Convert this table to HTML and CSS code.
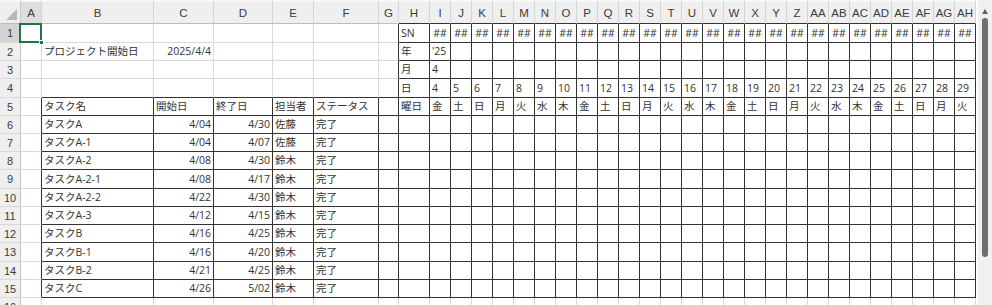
FILE: index.html
```html
<!DOCTYPE html>
<html lang="ja">
<head>
<meta charset="utf-8">
<title>ガントチャート</title>
<link rel="stylesheet" href="styles.css">
</head>
<body>
<div class="app">
<div class="sheet">
<!-- header row -->
<div class="corner"><span class="tri"></span></div>
<div class="ch sel">A</div><div class="ch">B</div><div class="ch">C</div><div class="ch">D</div><div class="ch">E</div><div class="ch">F</div><div class="ch">G</div>
<div class="ch bb">H</div><div class="ch bb">I</div><div class="ch bb">J</div><div class="ch bb">K</div><div class="ch bb">L</div><div class="ch bb">M</div><div class="ch bb">N</div><div class="ch bb">O</div><div class="ch bb">P</div><div class="ch bb">Q</div><div class="ch bb">R</div><div class="ch bb">S</div><div class="ch bb">T</div><div class="ch bb">U</div><div class="ch bb">V</div><div class="ch bb">W</div><div class="ch bb">X</div><div class="ch bb">Y</div><div class="ch bb">Z</div><div class="ch bb">AA</div><div class="ch bb">AB</div><div class="ch bb">AC</div><div class="ch bb">AD</div><div class="ch bb">AE</div><div class="ch bb">AF</div><div class="ch bb">AG</div><div class="ch bb">AH</div>

<!-- row 1 -->
<div class="rh sel">1</div>
<div class="c a1"><span class="selbox"><span class="handle"></span></span></div><div class="c"></div><div class="c"></div><div class="c"></div><div class="c"></div><div class="c"></div><div class="c br"></div>
<div class="c b">SN</div>
<div class="c b m">##</div><div class="c b m">##</div><div class="c b m">##</div><div class="c b m">##</div><div class="c b m">##</div><div class="c b m">##</div><div class="c b m">##</div><div class="c b m">##</div><div class="c b m">##</div><div class="c b m">##</div><div class="c b m">##</div><div class="c b m">##</div><div class="c b m">##</div><div class="c b m">##</div><div class="c b m">##</div><div class="c b m">##</div><div class="c b m">##</div><div class="c b m">##</div><div class="c b m">##</div><div class="c b m">##</div><div class="c b m">##</div><div class="c b m">##</div><div class="c b m">##</div><div class="c b m">##</div><div class="c b m">##</div><div class="c b m">##</div>

<!-- row 2 -->
<div class="rh">2</div>
<div class="c"></div><div class="c">プロジェクト開始日</div><div class="c r">2025/4/4</div><div class="c"></div><div class="c"></div><div class="c"></div><div class="c br"></div>
<div class="c b">年</div><div class="c b">'25</div>
<div class="c b"></div><div class="c b"></div><div class="c b"></div><div class="c b"></div><div class="c b"></div><div class="c b"></div><div class="c b"></div><div class="c b"></div><div class="c b"></div><div class="c b"></div><div class="c b"></div><div class="c b"></div><div class="c b"></div><div class="c b"></div><div class="c b"></div><div class="c b"></div><div class="c b"></div><div class="c b"></div><div class="c b"></div><div class="c b"></div><div class="c b"></div><div class="c b"></div><div class="c b"></div><div class="c b"></div><div class="c b"></div>

<!-- row 3 -->
<div class="rh">3</div>
<div class="c"></div><div class="c"></div><div class="c"></div><div class="c"></div><div class="c"></div><div class="c"></div><div class="c br"></div>
<div class="c b">月</div><div class="c b">4</div>
<div class="c b"></div><div class="c b"></div><div class="c b"></div><div class="c b"></div><div class="c b"></div><div class="c b"></div><div class="c b"></div><div class="c b"></div><div class="c b"></div><div class="c b"></div><div class="c b"></div><div class="c b"></div><div class="c b"></div><div class="c b"></div><div class="c b"></div><div class="c b"></div><div class="c b"></div><div class="c b"></div><div class="c b"></div><div class="c b"></div><div class="c b"></div><div class="c b"></div><div class="c b"></div><div class="c b"></div><div class="c b"></div>

<!-- row 4 -->
<div class="rh">4</div>
<div class="c"></div><div class="c bb"></div><div class="c bb"></div><div class="c bb"></div><div class="c bb"></div><div class="c bb"></div><div class="c b"></div>
<div class="c b">日</div>
<div class="c b">4</div><div class="c b">5</div><div class="c b">6</div><div class="c b">7</div><div class="c b">8</div><div class="c b">9</div><div class="c b">10</div><div class="c b">11</div><div class="c b">12</div><div class="c b">13</div><div class="c b">14</div><div class="c b">15</div><div class="c b">16</div><div class="c b">17</div><div class="c b">18</div><div class="c b">19</div><div class="c b">20</div><div class="c b">21</div><div class="c b">22</div><div class="c b">23</div><div class="c b">24</div><div class="c b">25</div><div class="c b">26</div><div class="c b">27</div><div class="c b">28</div><div class="c b">29</div>

<!-- row 5 -->
<div class="rh">5</div>
<div class="c br"></div><div class="c b">タスク名</div><div class="c b">開始日</div><div class="c b">終了日</div><div class="c b">担当者</div><div class="c b">ステータス</div><div class="c b"></div>
<div class="c b">曜日</div>
<div class="c b">金</div><div class="c b">土</div><div class="c b">日</div><div class="c b">月</div><div class="c b">火</div><div class="c b">水</div><div class="c b">木</div><div class="c b">金</div><div class="c b">土</div><div class="c b">日</div><div class="c b">月</div><div class="c b">火</div><div class="c b">水</div><div class="c b">木</div><div class="c b">金</div><div class="c b">土</div><div class="c b">日</div><div class="c b">月</div><div class="c b">火</div><div class="c b">水</div><div class="c b">木</div><div class="c b">金</div><div class="c b">土</div><div class="c b">日</div><div class="c b">月</div><div class="c b">火</div>

<!-- row 6 -->
<div class="rh">6</div>
<div class="c br"></div><div class="c b">タスクA</div><div class="c b r">4/04</div><div class="c b r">4/30</div><div class="c b">佐藤</div><div class="c b">完了</div><div class="c b"></div><div class="c b"></div>
<div class="c b"></div><div class="c b"></div><div class="c b"></div><div class="c b"></div><div class="c b"></div><div class="c b"></div><div class="c b"></div><div class="c b"></div><div class="c b"></div><div class="c b"></div><div class="c b"></div><div class="c b"></div><div class="c b"></div><div class="c b"></div><div class="c b"></div><div class="c b"></div><div class="c b"></div><div class="c b"></div><div class="c b"></div><div class="c b"></div><div class="c b"></div><div class="c b"></div><div class="c b"></div><div class="c b"></div><div class="c b"></div><div class="c b"></div>

<!-- row 7 -->
<div class="rh">7</div>
<div class="c br"></div><div class="c b">タスクA-1</div><div class="c b r">4/04</div><div class="c b r">4/07</div><div class="c b">佐藤</div><div class="c b">完了</div><div class="c b"></div><div class="c b"></div>
<div class="c b"></div><div class="c b"></div><div class="c b"></div><div class="c b"></div><div class="c b"></div><div class="c b"></div><div class="c b"></div><div class="c b"></div><div class="c b"></div><div class="c b"></div><div class="c b"></div><div class="c b"></div><div class="c b"></div><div class="c b"></div><div class="c b"></div><div class="c b"></div><div class="c b"></div><div class="c b"></div><div class="c b"></div><div class="c b"></div><div class="c b"></div><div class="c b"></div><div class="c b"></div><div class="c b"></div><div class="c b"></div><div class="c b"></div>

<!-- row 8 -->
<div class="rh">8</div>
<div class="c br"></div><div class="c b">タスクA-2</div><div class="c b r">4/08</div><div class="c b r">4/30</div><div class="c b">鈴木</div><div class="c b">完了</div><div class="c b"></div><div class="c b"></div>
<div class="c b"></div><div class="c b"></div><div class="c b"></div><div class="c b"></div><div class="c b"></div><div class="c b"></div><div class="c b"></div><div class="c b"></div><div class="c b"></div><div class="c b"></div><div class="c b"></div><div class="c b"></div><div class="c b"></div><div class="c b"></div><div class="c b"></div><div class="c b"></div><div class="c b"></div><div class="c b"></div><div class="c b"></div><div class="c b"></div><div class="c b"></div><div class="c b"></div><div class="c b"></div><div class="c b"></div><div class="c b"></div><div class="c b"></div>

<!-- row 9 -->
<div class="rh">9</div>
<div class="c br"></div><div class="c b">タスクA-2-1</div><div class="c b r">4/08</div><div class="c b r">4/17</div><div class="c b">鈴木</div><div class="c b">完了</div><div class="c b"></div><div class="c b"></div>
<div class="c b"></div><div class="c b"></div><div class="c b"></div><div class="c b"></div><div class="c b"></div><div class="c b"></div><div class="c b"></div><div class="c b"></div><div class="c b"></div><div class="c b"></div><div class="c b"></div><div class="c b"></div><div class="c b"></div><div class="c b"></div><div class="c b"></div><div class="c b"></div><div class="c b"></div><div class="c b"></div><div class="c b"></div><div class="c b"></div><div class="c b"></div><div class="c b"></div><div class="c b"></div><div class="c b"></div><div class="c b"></div><div class="c b"></div>

<!-- row 10 -->
<div class="rh">10</div>
<div class="c br"></div><div class="c b">タスクA-2-2</div><div class="c b r">4/22</div><div class="c b r">4/30</div><div class="c b">鈴木</div><div class="c b">完了</div><div class="c b"></div><div class="c b"></div>
<div class="c b"></div><div class="c b"></div><div class="c b"></div><div class="c b"></div><div class="c b"></div><div class="c b"></div><div class="c b"></div><div class="c b"></div><div class="c b"></div><div class="c b"></div><div class="c b"></div><div class="c b"></div><div class="c b"></div><div class="c b"></div><div class="c b"></div><div class="c b"></div><div class="c b"></div><div class="c b"></div><div class="c b"></div><div class="c b"></div><div class="c b"></div><div class="c b"></div><div class="c b"></div><div class="c b"></div><div class="c b"></div><div class="c b"></div>

<!-- row 11 -->
<div class="rh">11</div>
<div class="c br"></div><div class="c b">タスクA-3</div><div class="c b r">4/12</div><div class="c b r">4/15</div><div class="c b">鈴木</div><div class="c b">完了</div><div class="c b"></div><div class="c b"></div>
<div class="c b"></div><div class="c b"></div><div class="c b"></div><div class="c b"></div><div class="c b"></div><div class="c b"></div><div class="c b"></div><div class="c b"></div><div class="c b"></div><div class="c b"></div><div class="c b"></div><div class="c b"></div><div class="c b"></div><div class="c b"></div><div class="c b"></div><div class="c b"></div><div class="c b"></div><div class="c b"></div><div class="c b"></div><div class="c b"></div><div class="c b"></div><div class="c b"></div><div class="c b"></div><div class="c b"></div><div class="c b"></div><div class="c b"></div>

<!-- row 12 -->
<div class="rh">12</div>
<div class="c br"></div><div class="c b">タスクB</div><div class="c b r">4/16</div><div class="c b r">4/25</div><div class="c b">鈴木</div><div class="c b">完了</div><div class="c b"></div><div class="c b"></div>
<div class="c b"></div><div class="c b"></div><div class="c b"></div><div class="c b"></div><div class="c b"></div><div class="c b"></div><div class="c b"></div><div class="c b"></div><div class="c b"></div><div class="c b"></div><div class="c b"></div><div class="c b"></div><div class="c b"></div><div class="c b"></div><div class="c b"></div><div class="c b"></div><div class="c b"></div><div class="c b"></div><div class="c b"></div><div class="c b"></div><div class="c b"></div><div class="c b"></div><div class="c b"></div><div class="c b"></div><div class="c b"></div><div class="c b"></div>

<!-- row 13 -->
<div class="rh">13</div>
<div class="c br"></div><div class="c b">タスクB-1</div><div class="c b r">4/16</div><div class="c b r">4/20</div><div class="c b">鈴木</div><div class="c b">完了</div><div class="c b"></div><div class="c b"></div>
<div class="c b"></div><div class="c b"></div><div class="c b"></div><div class="c b"></div><div class="c b"></div><div class="c b"></div><div class="c b"></div><div class="c b"></div><div class="c b"></div><div class="c b"></div><div class="c b"></div><div class="c b"></div><div class="c b"></div><div class="c b"></div><div class="c b"></div><div class="c b"></div><div class="c b"></div><div class="c b"></div><div class="c b"></div><div class="c b"></div><div class="c b"></div><div class="c b"></div><div class="c b"></div><div class="c b"></div><div class="c b"></div><div class="c b"></div>

<!-- row 14 -->
<div class="rh">14</div>
<div class="c br"></div><div class="c b">タスクB-2</div><div class="c b r">4/21</div><div class="c b r">4/25</div><div class="c b">鈴木</div><div class="c b">完了</div><div class="c b"></div><div class="c b"></div>
<div class="c b"></div><div class="c b"></div><div class="c b"></div><div class="c b"></div><div class="c b"></div><div class="c b"></div><div class="c b"></div><div class="c b"></div><div class="c b"></div><div class="c b"></div><div class="c b"></div><div class="c b"></div><div class="c b"></div><div class="c b"></div><div class="c b"></div><div class="c b"></div><div class="c b"></div><div class="c b"></div><div class="c b"></div><div class="c b"></div><div class="c b"></div><div class="c b"></div><div class="c b"></div><div class="c b"></div><div class="c b"></div><div class="c b"></div>

<!-- row 15 -->
<div class="rh">15</div>
<div class="c br"></div><div class="c b">タスクC</div><div class="c b r">4/26</div><div class="c b r">5/02</div><div class="c b">鈴木</div><div class="c b">完了</div><div class="c b"></div><div class="c b"></div>
<div class="c b"></div><div class="c b"></div><div class="c b"></div><div class="c b"></div><div class="c b"></div><div class="c b"></div><div class="c b"></div><div class="c b"></div><div class="c b"></div><div class="c b"></div><div class="c b"></div><div class="c b"></div><div class="c b"></div><div class="c b"></div><div class="c b"></div><div class="c b"></div><div class="c b"></div><div class="c b"></div><div class="c b"></div><div class="c b"></div><div class="c b"></div><div class="c b"></div><div class="c b"></div><div class="c b"></div><div class="c b"></div><div class="c b"></div>

<!-- row 16 -->
<div class="rh">16</div>
<div class="c"></div><div class="c"></div><div class="c"></div><div class="c"></div><div class="c"></div><div class="c"></div><div class="c"></div><div class="c"></div>
<div class="c"></div><div class="c"></div><div class="c"></div><div class="c"></div><div class="c"></div><div class="c"></div><div class="c"></div><div class="c"></div><div class="c"></div><div class="c"></div><div class="c"></div><div class="c"></div><div class="c"></div><div class="c"></div><div class="c"></div><div class="c"></div><div class="c"></div><div class="c"></div><div class="c"></div><div class="c"></div><div class="c"></div><div class="c"></div><div class="c"></div><div class="c"></div><div class="c"></div><div class="c"></div>
</div>
<div class="vscroll">
<div class="track">
<span class="arrow"></span>
<span class="thumb"></span>
</div>
</div>
</div>
</body>
</html>
```
FILE: styles.css
```css
* { box-sizing: border-box; }
html, body {
  margin: 0;
  padding: 0;
  background: #fff;
  overflow: hidden;
}
body {
  width: 992px;
  height: 305px;
  font-family: "Open Sans", "Noto Sans CJK JP", sans-serif;
  font-size: 10.5px;
  color: #333;
}
.app {
  display: flex;
  width: 992px;
  height: 305px;
  overflow: hidden;
}
.sheet {
  display: grid;
  grid-template-columns: 21px 21px 112px 60px 59px 41px 65px 20px 31px repeat(26, 21px);
  grid-template-rows: 24px 19px 18px 18px 19px 18px 18px 18px 18px 19px 18px 18px 18px 19px 18px 18px 18px;
  width: 976px;
  flex: none;
  align-content: start;
}
.c {
  display: flex;
  align-items: center;
  padding: 0 2px;
  white-space: nowrap;
  overflow: hidden;
  border-right: 1px solid #dadada;
  border-bottom: 1px solid #dadada;
  line-height: 1;
}
.c.r { justify-content: flex-end; }
.c.m { justify-content: center; padding: 0; }
.c.b { border-right-color: #333; border-bottom-color: #333; }
.c.br { border-right-color: #333; }
.c.bb { border-bottom-color: #333; }

.corner {
  position: relative;
  background: #efefef;
  border-top: 2px solid #f7f7f7;
  border-right: 1px solid #c8c8c8;
  border-bottom: 1px solid #bdbdbd;
}
.tri {
  position: absolute;
  right: 3px;
  bottom: 3px;
  width: 0;
  height: 0;
  border-left: 11px solid transparent;
  border-bottom: 11px solid #b9b9b9;
}
.ch {
  display: flex;
  align-items: center;
  justify-content: center;
  background: #efefef;
  border-top: 2px solid #f7f7f7;
  border-right: 1px solid #d4d4d4;
  border-bottom: 1px solid #bdbdbd;
  font-family: "Liberation Sans", "Open Sans", sans-serif;
  font-size: 11.5px;
  color: #3c3c3c;
  padding-top: 1px;
}
.ch.bb { border-bottom-color: #333; }
.ch.sel { background: #dedede; }
.rh {
  display: flex;
  align-items: center;
  justify-content: center;
  background: #efefef;
  border-right: 1px solid #c4c4c4;
  border-bottom: 1px solid #dadada;
  font-family: "Liberation Sans", "Open Sans", sans-serif;
  font-size: 11px;
  color: #3c3c3c;
}
.rh.sel { background: #d4d4d4; }

.a1 { position: relative; overflow: visible; }
.selbox {
  position: absolute;
  left: -2px;
  top: -1px;
  width: 23px;
  height: 20px;
  border: 2px solid #217346;
  z-index: 2;
}
.handle {
  position: absolute;
  right: -4px;
  bottom: -4px;
  width: 5px;
  height: 5px;
  background: #217346;
  border: 1px solid #fff;
}

.vscroll {
  width: 16px;
  height: 305px;
  padding-left: 2px;
  background: #fff;
  flex: none;
}
.track {
  display: flex;
  flex-direction: column;
  align-items: center;
  height: 100%;
  background: #f0f0f0;
  padding-top: 9px;
}
.arrow {
  width: 0;
  height: 0;
  border-left: 3.5px solid transparent;
  border-right: 3.5px solid transparent;
  border-bottom: 5px solid #606060;
}
.thumb {
  margin-top: 4px;
  width: 6px;
  height: 239px;
  border-radius: 3px;
  background: #6e6e6e;
}
```
